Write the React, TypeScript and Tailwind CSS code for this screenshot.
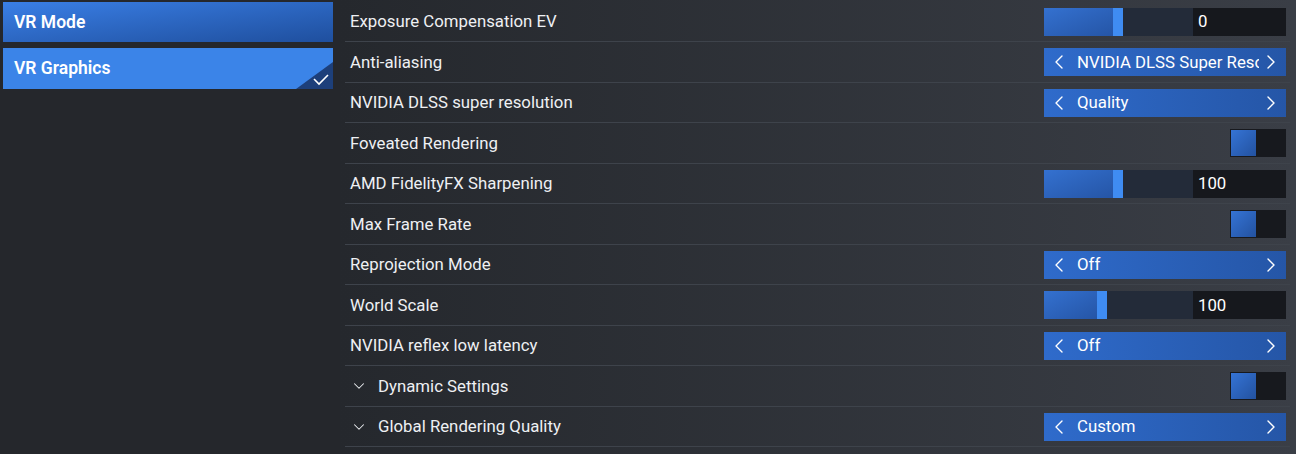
import { ChevronDown, ChevronLeft, ChevronRight } from "lucide-react";

type Row =
  | { label: string; kind: "slider"; fill: number; value: string }
  | { label: string; kind: "select"; value: string; group?: boolean }
  | { label: string; kind: "toggle"; group?: boolean };

const ROWS: Row[] = [
  { label: "Exposure Compensation EV", kind: "slider", fill: 69, value: "0" },
  { label: "Anti-aliasing", kind: "select", value: "NVIDIA DLSS Super Resolution" },
  { label: "NVIDIA DLSS super resolution", kind: "select", value: "Quality" },
  { label: "Foveated Rendering", kind: "toggle" },
  { label: "AMD FidelityFX Sharpening", kind: "slider", fill: 69, value: "100" },
  { label: "Max Frame Rate", kind: "toggle" },
  { label: "Reprojection Mode", kind: "select", value: "Off" },
  { label: "World Scale", kind: "slider", fill: 53, value: "100" },
  { label: "NVIDIA reflex low latency", kind: "select", value: "Off" },
  { label: "Dynamic Settings", kind: "toggle", group: true },
  { label: "Global Rendering Quality", kind: "select", value: "Custom", group: true },
];

const Slider = ({ fill, value }: { fill: number; value: string }) => (
  <div className="flex h-[28px] w-[242px]">
    <div className="flex w-[149px] bg-[#232b39]">
      <div
        className="h-full bg-gradient-to-br from-[#3471d0] to-[#2555a6]"
        style={{ width: fill }}
      />
      <div className="h-full w-[10px] bg-[#3f8cf2]" />
    </div>
    <div className="flex flex-1 items-center bg-[#16181d] pl-[5px] text-[16.8px] text-white">
      {value}
    </div>
  </div>
);

const Select = ({ value }: { value: string }) => (
  <div className="flex h-[28px] w-[242px] items-center bg-gradient-to-r from-[#2f6bcb] to-[#2556a7] text-white">
    <ChevronLeft className="ml-[3px] h-[24px] w-[24px] shrink-0" strokeWidth={1.4} />
    <span className="ml-[6px] w-[184px] overflow-hidden whitespace-nowrap text-[16.8px]">
      {value}
    </span>
    <ChevronRight className="ml-auto mr-[3px] h-[24px] w-[24px] shrink-0" strokeWidth={1.4} />
  </div>
);

const Toggle = () => (
  <div className="flex h-[28px] w-[56px] bg-[#17191e] p-[1px]">
    <div className="h-full w-[25px] bg-gradient-to-br from-[#3574d6] to-[#2352a0]" />
  </div>
);

export default function App() {
  return (
    <div
      className="flex h-[454px] w-[1296px] overflow-hidden bg-[#25272c] text-[#eef0f3]"
      style={{ fontFamily: "Roboto, 'Liberation Sans', sans-serif" }}
    >
      <div className="flex w-[340px] shrink-0 flex-col gap-[6px] pl-[3px] pr-[7px] pt-[2px]">
        <div className="flex h-[40px] items-center bg-gradient-to-br from-[#3a7fe6] to-[#1f4f9e] pl-[11px] text-[17.5px] font-semibold text-white">
          VR Mode
        </div>
        <div className="relative flex h-[41px] items-center overflow-hidden bg-[#3b84e8] pl-[11px] text-[17.5px] font-semibold text-white">
          VR Graphics
          <svg
            className="absolute bottom-0 right-0"
            width="37"
            height="27"
            viewBox="0 0 37 27"
          >
            <polygon points="37,0 37,27 0,27" fill="#1d3f7a" />
            <polyline
              points="18,17 23,22 32,13"
              fill="none"
              stroke="#ffffff"
              strokeWidth="1.6"
            />
          </svg>
        </div>
      </div>
      <div className="flex flex-1 flex-col bg-gradient-to-r from-[#25282d] to-[#3a3e46] pl-[5px] pr-[6px] pt-[1.5px]">
        {ROWS.map((row, i) => (
          <div
            key={i}
            className="flex h-[40.5px] shrink-0 items-center border-b border-[#3e434b] pl-[5px] pr-[4px] pt-[1px]"
          >
            {row.kind !== "slider" && row.group ? (
              <ChevronDown className="mr-[10px] h-[18px] w-[18px]" strokeWidth={1.4} />
            ) : null}
            <span className="text-[16.8px]">{row.label}</span>
            <div className="ml-auto">
              {row.kind === "slider" && <Slider fill={row.fill} value={row.value} />}
              {row.kind === "select" && <Select value={row.value} />}
              {row.kind === "toggle" && <Toggle />}
            </div>
          </div>
        ))}
      </div>
    </div>
  );
}
